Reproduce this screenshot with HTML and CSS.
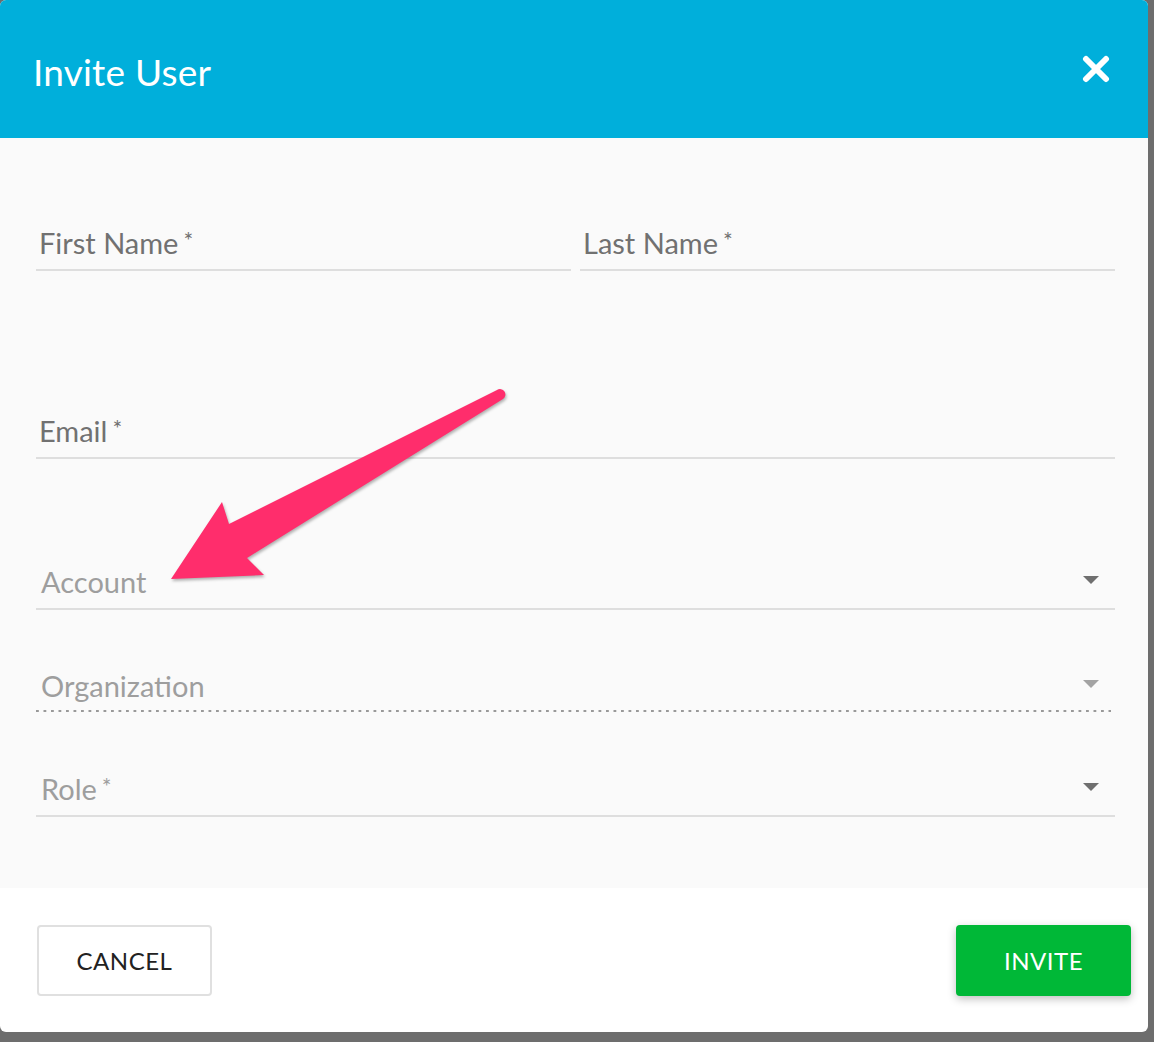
FILE: index.html
```html
<!DOCTYPE html>
<html>

<head>
    <meta charset="UTF-8">
    <title>Invite User</title>
    <link rel="stylesheet" href="styles.css">
</head>

<body>
    <div class="modal">
        <div class="modal-head">
            <h1 class="title">Invite User</h1>
            <div class="close">
                <svg width="28" height="28" viewBox="0 0 28 28">
                    <path d="M4 4 L24 24 M24 4 L4 24" stroke="#fff" stroke-width="6" stroke-linecap="round" />
                </svg>
            </div>
        </div>

        <div class="modal-body">
            <div class="row">
                <div class="field">
                    <span class="label">First Name<sup>*</sup></span>
                </div>
                <div class="field">
                    <span class="label">Last Name<sup>*</sup></span>
                </div>
            </div>

            <div class="field field-email">
                <span class="label">Email<sup>*</sup></span>
            </div>

            <div class="field select field-account">
                <span class="label muted">Account</span>
                <i class="caret"></i>
            </div>

            <div class="field select dotted field-org">
                <span class="label muted">Organization</span>
                <i class="caret light"></i>
            </div>

            <div class="field select field-role">
                <span class="label muted">Role<sup>*</sup></span>
                <i class="caret"></i>
            </div>
        </div>

        <div class="modal-foot">
            <button class="btn btn-cancel">CANCEL</button>
            <button class="btn btn-invite">INVITE</button>
        </div>

        <!-- 标注箭头 -->
        <svg class="pointer" width="1148" height="1032" viewBox="0 0 1148 1032">
            <path d="M171 579 L222 502 L229 524 L497 390 A5.4 5.4 0 0 1 503 399 L247 558 L264 575 Z" fill="#ff2d6c" />
        </svg>
    </div>
</body>

</html>
```

FILE: styles.css
```css
* {
    padding: 0;
    margin: 0;
    box-sizing: border-box;
}

body {
    background: #6d6d6d;
    font-family: Lato, "Open Sans", sans-serif;
    width: 1154px;
    height: 1042px;
}

.modal {
    position: relative;
    width: 1148px;
    height: 1032px;
    background: #fff;
    border-radius: 6px;
    overflow: hidden;
}

.modal-head {
    height: 138px;
    background: #00afdb;
    display: flex;
    align-items: center;
    justify-content: space-between;
    padding: 0 38px 0 33px;
}

.title {
    color: #fff;
    font-size: 37px;
    font-weight: 400;
    letter-spacing: 0.2px;
    margin-top: 4px;
}

.close {
    width: 28px;
    height: 28px;
}

.close svg {
    display: block;
}

.modal-body {
    height: 750px;
    background: #fafafa;
    padding: 75px 33px 0 36px;
}

.row {
    display: flex;
    gap: 9px;
}

.row .field {
    flex: 1;
}

.field {
    height: 58px;
    border-bottom: 2px solid #dedede;
    display: flex;
    align-items: flex-end;
    justify-content: space-between;
    padding: 0 0 8px 3px;
}

.label {
    font-size: 29px;
    line-height: 36px;
    color: #717171;
}

.label.muted {
    color: #9e9e9e;
    padding-left: 2px;
}

.label sup {
    font-size: 23px;
    margin-left: 5px;
    vertical-align: 5px;
    line-height: 0;
}

.field-email {
    margin-top: 130px;
}

.field-account {
    margin-top: 93px;
}

.field-org {
    margin-top: 44px;
    margin-right: 4px;
    border-bottom: 0;
    background-image: linear-gradient(to right, #999 2.5px, transparent 2.5px);
    background-size: 7.5px 2px;
    background-repeat: repeat-x;
    background-position: 0 100%;
}

.field-role {
    margin-top: 47px;
}

.caret {
    width: 0;
    height: 0;
    border-left: 8px solid transparent;
    border-right: 8px solid transparent;
    border-top: 8px solid #6f6f6f;
    margin: 0 16px 16px 0;
}

.field-org .caret {
    margin-right: 12px;
}

.caret.light {
    border-top-color: #a3a3a3;
}

.modal-foot {
    height: 144px;
    display: flex;
    justify-content: space-between;
    align-items: flex-start;
    padding: 37px 17px 0 37px;
}

.btn {
    width: 175px;
    height: 71px;
    border-radius: 4px;
    font-family: Lato, "Open Sans", sans-serif;
    font-size: 24px;
    letter-spacing: 0.5px;
    cursor: pointer;
}

.btn-cancel {
    background: #fff;
    border: 2px solid #e0e0e0;
    color: #222;
}

.btn-invite {
    background: #00b837;
    border: 0;
    color: #fff;
    box-shadow: 0 3px 8px rgba(0, 0, 0, 0.25);
}

.pointer {
    position: absolute;
    left: 0;
    top: 0;
    pointer-events: none;
    filter: drop-shadow(1px 2px 1.5px rgba(0, 0, 0, 0.3));
}
```
